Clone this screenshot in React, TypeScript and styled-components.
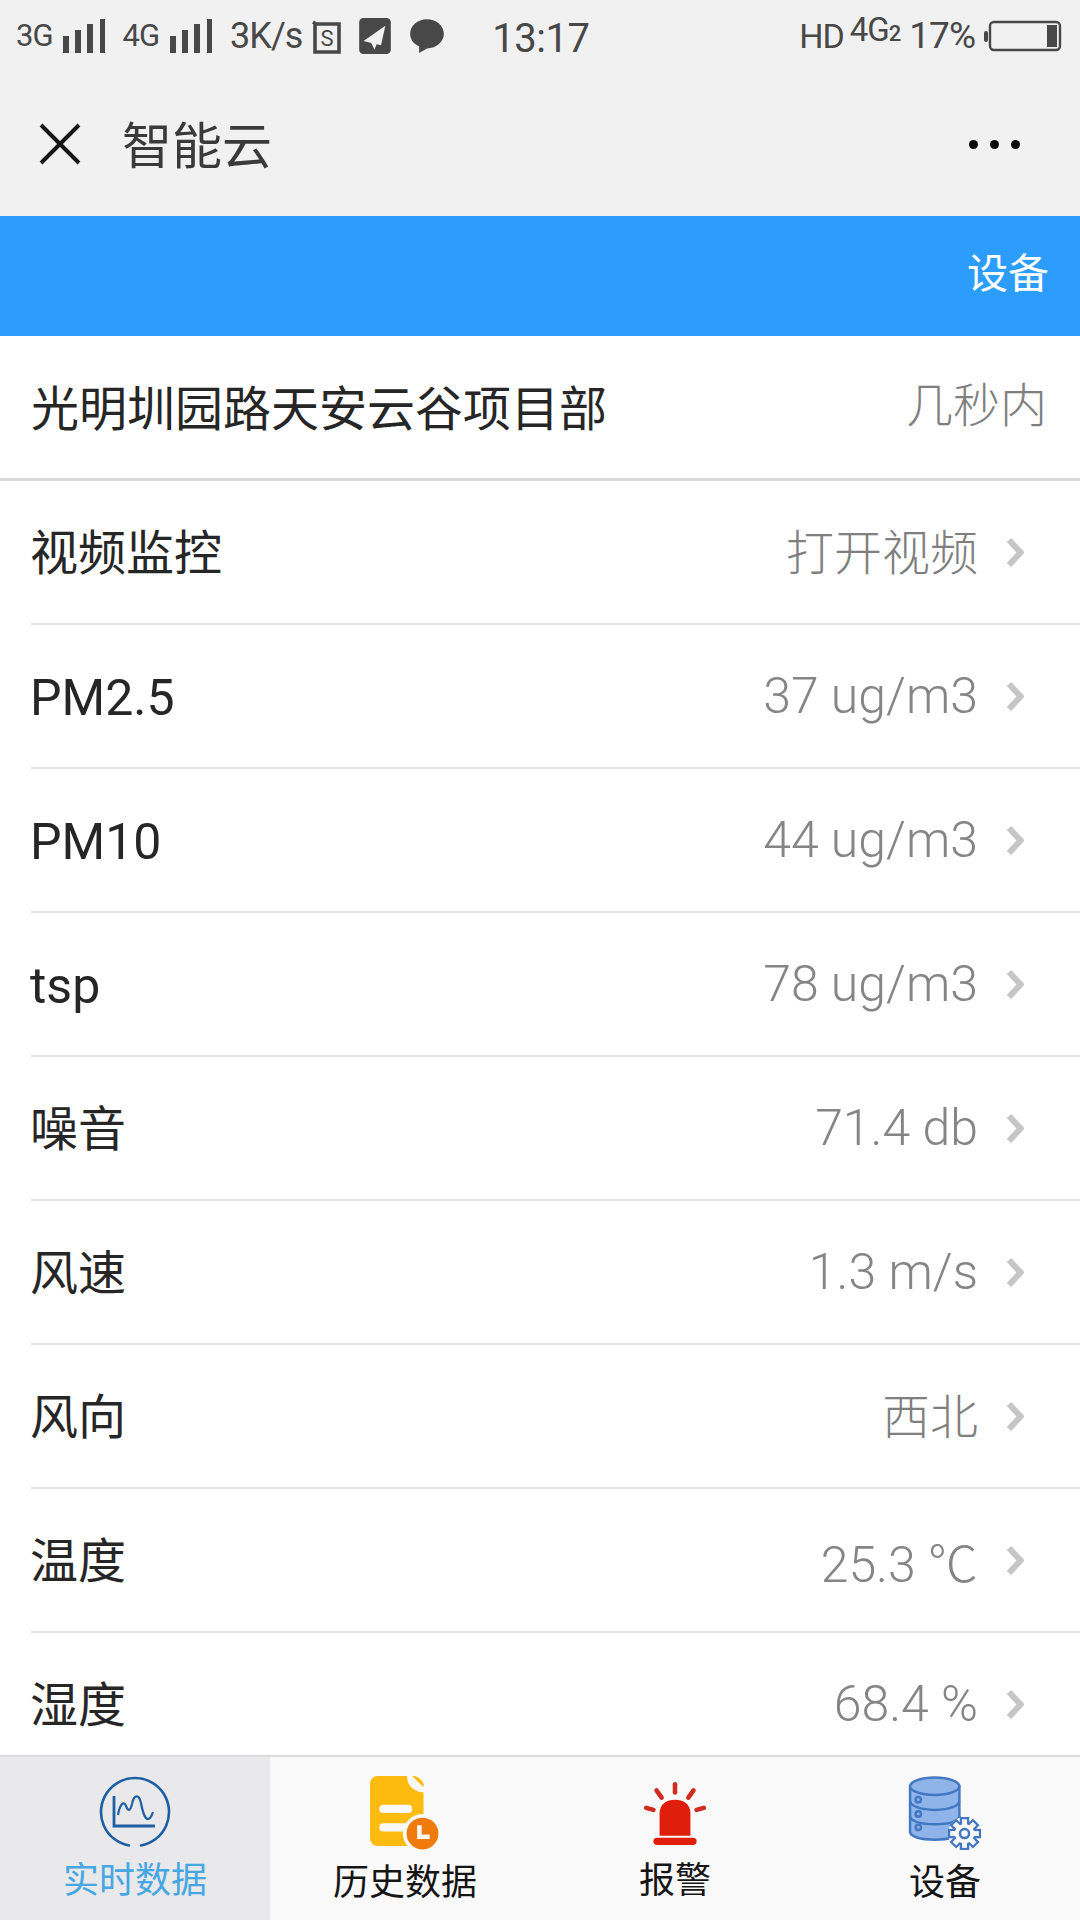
import React from 'react';
import styled, { createGlobalStyle } from 'styled-components';

const GlobalStyle = createGlobalStyle`
  html, body {
    margin: 0;
    padding: 0;
    background: #fff;
    font-family: Roboto, "Noto Sans CJK SC", sans-serif;
  }
`;

const Page = styled.div`
  width: 1080px;
  height: 1920px;
  display: flex;
  flex-direction: column;
  overflow: hidden;
`;

const StatusBar = styled.div`
  height: 72px;
  flex: none;
  display: flex;
  align-items: center;
  background: #f2f1f2;
  color: #484848;
  padding: 0 16px;
  box-sizing: border-box;
`;

const StatusText = styled.span<{ $size?: number; $gap?: number }>`
  font-size: ${p => p.$size ?? 32}px;
  margin-left: ${p => p.$gap ?? 0}px;
  letter-spacing: -1px;
  line-height: 72px;
  white-space: nowrap;
`;

const StatusIcon = styled.svg<{ $gap?: number }>`
  flex: none;
  margin-left: ${p => p.$gap ?? 0}px;
`;

const Clock = styled.span`
  font-size: 40px;
  margin-left: 48px;
  letter-spacing: -0.5px;
  margin-top: 4px;
`;

const StatusRight = styled.div`
  margin-left: auto;
  display: flex;
  align-items: center;
  padding-right: 2px;
`;

const NetworkBadge = styled.span`
  position: relative;
  margin-left: 6px;
  font-size: 33px;
  letter-spacing: -1px;
  line-height: 34px;
  top: -4px;

  small {
    font-size: 22px;
    font-weight: 500;
    letter-spacing: 0;
  }
`;

const NavBar = styled.div`
  height: 144px;
  flex: none;
  display: flex;
  align-items: center;
  background: #f2f1f2;
  padding: 0 60px 0 38px;
  box-sizing: border-box;
`;

const NavTitle = styled.div`
  margin-left: 40px;
  font-size: 50px;
  color: #3a3a3a;
  padding-bottom: 5px;
`;

const NavMore = styled.div`
  margin-left: auto;
  display: flex;
  gap: 12px;
`;

const Dot = styled.i`
  width: 9px;
  height: 9px;
  border-radius: 50%;
  background: #0a0a0a;
`;

const BlueBar = styled.div`
  height: 120px;
  flex: none;
  display: flex;
  align-items: center;
  justify-content: flex-end;
  padding: 0 31px 12px 0;
  background: #2c9dfc;
  color: #fff;
  font-size: 41px;
  box-sizing: border-box;
`;

const ProjectRow = styled.div`
  height: 145px;
  flex: none;
  display: flex;
  align-items: center;
  justify-content: space-between;
  padding: 0 33px 5px 31px;
  border-bottom: 3px solid #d9d9d9;
  box-sizing: border-box;
  font-size: 48px;
  color: #262626;
`;

const Muted = styled.span`
  color: #7f7f7f;
  font-size: 47px;
  font-weight: 300;
  padding-bottom: 6px;
`;

const List = styled.div`
  flex: 1;
  min-height: 0;
  overflow: hidden;
  background: #fff;
`;

const Row = styled.div`
  height: 144px;
  margin-left: 31px;
  padding-right: 56px;
  display: flex;
  align-items: center;
  justify-content: space-between;
  border-bottom: 2px solid #e3e3e3;
  box-sizing: border-box;
  color: #262626;
`;

const RowName = styled.span<{ $latin?: boolean }>`
  margin-left: -1px;
  font-size: ${p => (p.$latin ? 50 : 48)}px;
  padding: ${p => (p.$latin ? '4px 0 0' : '0 0 6px')};
`;

const RowValue = styled.div`
  display: flex;
  align-items: center;
  gap: 28px;
`;

const ValueText = styled.span<{ $latin?: boolean }>`
  color: ${p => (p.$latin ? '#858585' : '#7f7f7f')};
  font-size: ${p => (p.$latin ? 50 : 48)}px;
  font-weight: 300;
  padding-bottom: ${p => (p.$latin ? 0 : 6)}px;
`;

const TabBar = styled.div`
  height: 165px;
  flex: none;
  display: grid;
  grid-template-columns: repeat(4, 270px);
  background: #f9f9f9;
  border-top: 2px solid #dcdcdc;
  box-sizing: border-box;
`;

const Tab = styled.div<{ $active?: boolean }>`
  display: flex;
  flex-direction: column;
  align-items: center;
  background: ${p => (p.$active ? '#e9e8ea' : 'transparent')};
  color: ${p => (p.$active ? '#46a7e2' : '#151515')};
  font-size: 36px;
  padding-top: 19px;
  box-sizing: border-box;
`;

const TabIcon = styled.svg`
  flex: none;
  display: block;
`;

const TabLabel = styled.span`
  margin-top: 9px;
  line-height: 48px;
`;

const Signal = ({ gap }: { gap: number }) => (
  <StatusIcon $gap={gap} width="42" height="34" viewBox="0 0 42 34">
    <rect x="0" y="17" width="6" height="17" fill="#484848" />
    <rect x="12" y="11" width="6" height="23" fill="#484848" />
    <rect x="24" y="5" width="6" height="29" fill="#484848" />
    <rect x="37" y="0" width="5" height="34" fill="#484848" />
  </StatusIcon>
);

const Chevron = () => (
  <svg width="18" height="29" viewBox="0 0 18 29" fill="none">
    <path d="M3 2 L14.500 14.500 L3 27" stroke="#c6c6c6" strokeWidth="6" />
  </svg>
);

const ChartIcon = () => (
  <TabIcon width="72" height="72" viewBox="0 0 72 72" fill="none" stroke="#1c5fa3">
    <path d="M30 69.5 A34 34 0 1 1 42 69.5" strokeWidth="2.6" strokeLinecap="round" />
    <path d="M15 20 V50 H56" strokeWidth="2.8" />
    <path
      d="M19 39 C21 27 25 25 27 30 C29 35 31 36 33 28 C35 18 40 18 42 27 C44 38 47 46 51 42 C52 41 53 39 54 36"
      strokeWidth="2.2"
    />
  </TabIcon>
);

const HistoryIcon = () => (
  <TabIcon width="70" height="74" viewBox="0 0 68 72">
    <path
      d="M8 0 H36 C36 9 42 15 52 16 V60 C52 66 48 68 44 68 H8 C3 68 0 65 0 60 V8 C0 3 3 0 8 0 Z"
      fill="#fdbb0f"
    />
    <path d="M41 0 L52 11 V8 C52 5 46 0 43 0 Z" fill="#fdbb0f" />
    <rect x="9" y="28" width="32" height="8" rx="4" fill="#f9f9f9" />
    <rect x="9" y="46" width="30" height="8" rx="4" fill="#f9f9f9" />
    <circle cx="51" cy="56" r="19" fill="#f9f9f9" />
    <circle cx="51" cy="56" r="15.5" fill="#ef7b0c" />
    <path d="M48 48 V59 H58" fill="none" stroke="#f9f9f9" strokeWidth="4.4" />
  </TabIcon>
);

const AlarmIcon = () => (
  <TabIcon width="62" height="72" viewBox="0 -6 60 70">
    <path
      d="M15 52 V30 C15 21 22 17 30 17 C38 17 45 21 45 30 V52 Z"
      fill="#df1f0b"
    />
    <rect x="9" y="54" width="42" height="7" rx="3.5" fill="#df1f0b" />
    <g stroke="#d12a1e" strokeWidth="4.4" strokeLinecap="round">
      <path d="M30 2 V10" />
      <path d="M12 8 L17 15" />
      <path d="M48 8 L43 15" />
      <path d="M2 25 L9 27" />
      <path d="M58 25 L51 27" />
    </g>
  </TabIcon>
);

const gearTeeth = [0, 45, 90, 135, 180, 225, 270, 315];

const DeviceIcon = () => (
  <TabIcon width="74" height="74" viewBox="0 0 72 72">
    <g fill="#8fb4ea" stroke="#4477c2" strokeWidth="2.4">
      <path d="M2 10 V54 C2 59 12 62 26 62 C40 62 50 59 50 54 V10 Z" />
      <ellipse cx="26" cy="10" rx="24" ry="8.5" />
    </g>
    <g fill="none" stroke="#4477c2" strokeWidth="2.4">
      <path d="M2 24 C2 29 12 33 26 33 C40 33 50 29 50 24" />
      <path d="M2 39 C2 44 12 47 26 47 C40 47 50 44 50 39" />
      <circle cx="10" cy="23" r="2.6" />
      <circle cx="10" cy="37" r="2.6" />
      <circle cx="10" cy="50" r="2.6" />
    </g>
    <circle cx="55" cy="56" r="16" fill="#f9f9f9" />
    <g fill="#f9f9f9" stroke="#4477c2" strokeWidth="2.2">
      {gearTeeth.map(a => (
        <rect key={a} x="51.5" y="41" width="7" height="7" transform={`rotate(${a} 55 56)`} />
      ))}
      <circle cx="55" cy="56" r="10.5" />
    </g>
    <g fill="#f9f9f9">
      {gearTeeth.map(a => (
        <rect key={a} x="52.6" y="44" width="4.8" height="5" transform={`rotate(${a} 55 56)`} />
      ))}
    </g>
    <circle cx="55" cy="56" r="4.4" fill="none" stroke="#4477c2" strokeWidth="2.4" />
  </TabIcon>
);

const readings = [
  { name: '视频监控', value: '打开视频', latinName: false, latinValue: false },
  { name: 'PM2.5', value: '37 ug/m3', latinName: true, latinValue: true },
  { name: 'PM10', value: '44 ug/m3', latinName: true, latinValue: true },
  { name: 'tsp', value: '78 ug/m3', latinName: true, latinValue: true },
  { name: '噪音', value: '71.4 db', latinName: false, latinValue: true },
  { name: '风速', value: '1.3 m/s', latinName: false, latinValue: true },
  { name: '风向', value: '西北', latinName: false, latinValue: false },
  { name: '温度', value: '25.3 ℃', latinName: false, latinValue: true },
  { name: '湿度', value: '68.4 %', latinName: false, latinValue: true },
];

const App: React.FC = () => (
  <Page>
    <GlobalStyle />
    <StatusBar>
      <StatusText $size={31}>3G</StatusText>
      <Signal gap={10} />
      <StatusText $size={31} $gap={18}>4G</StatusText>
      <Signal gap={11} />
      <StatusText $size={36} $gap={18}>3K/s</StatusText>
      <StatusIcon $gap={10} width="29" height="35" viewBox="0 0 29 35">
        <path d="M1 3 L4 5 H27 V33 H3 V4" fill="none" stroke="#484848" strokeWidth="3.6" />
        <text x="15" y="27" fontSize="22" textAnchor="middle" fill="#484848" fontFamily="Roboto">S</text>
      </StatusIcon>
      <StatusIcon $gap={18} width="32" height="36" viewBox="0 0 29 33">
        <rect width="29" height="33" rx="4" fill="#484848" />
        <path d="M24 7 L4 21 L11 23 L14 29 L16 24 L20 25 Z" fill="#f2f1f2" />
      </StatusIcon>
      <StatusIcon $gap={19} width="34" height="36" viewBox="0 0 30 32">
        <path d="M15 1 C23.5 1 30 7 30 14 C30 21 23.500 27 15 27 L8 31 L8 25 C3 23 0 19 0 14 C0 7 6.500 1 15 1 Z" fill="#484848" />
      </StatusIcon>
      <Clock>13:17</Clock>
      <StatusRight>
        <StatusText $size={34}>HD</StatusText>
        <NetworkBadge>
          4G<small>2</small>
        </NetworkBadge>
        <StatusText $size={37} $gap={8}>17%</StatusText>
        <StatusIcon $gap={9} width="78" height="32" viewBox="0 0 78 32">
          <rect x="0" y="11" width="4" height="11" rx="2" fill="#484848" />
          <rect x="6" y="2" width="70" height="28" rx="4" fill="none" stroke="#484848" strokeWidth="2.4" />
          <rect x="63" y="5" width="10" height="22" fill="#484848" />
        </StatusIcon>
      </StatusRight>
    </StatusBar>
    <NavBar>
      <svg width="44" height="44" viewBox="0 0 44 44" fill="none">
        <path d="M3 3 L41 41 M41 3 L3 41" stroke="#141414" strokeWidth="4" />
      </svg>
      <NavTitle>智能云</NavTitle>
      <NavMore>
        <Dot />
        <Dot />
        <Dot />
      </NavMore>
    </NavBar>
    <BlueBar>设备</BlueBar>
    <ProjectRow>
      <span>光明圳园路天安云谷项目部</span>
      <Muted>几秒内</Muted>
    </ProjectRow>
    <List>
      {readings.map(item => (
        <Row key={item.name}>
          <RowName $latin={item.latinName}>{item.name}</RowName>
          <RowValue>
            <ValueText $latin={item.latinValue}>{item.value}</ValueText>
            <Chevron />
          </RowValue>
        </Row>
      ))}
    </List>
    <TabBar>
      <Tab $active>
        <ChartIcon />
        <TabLabel>实时数据</TabLabel>
      </Tab>
      <Tab>
        <HistoryIcon />
        <TabLabel>历史数据</TabLabel>
      </Tab>
      <Tab>
        <AlarmIcon />
        <TabLabel>报警</TabLabel>
      </Tab>
      <Tab>
        <DeviceIcon />
        <TabLabel>设备</TabLabel>
      </Tab>
    </TabBar>
  </Page>
);

export default App;
